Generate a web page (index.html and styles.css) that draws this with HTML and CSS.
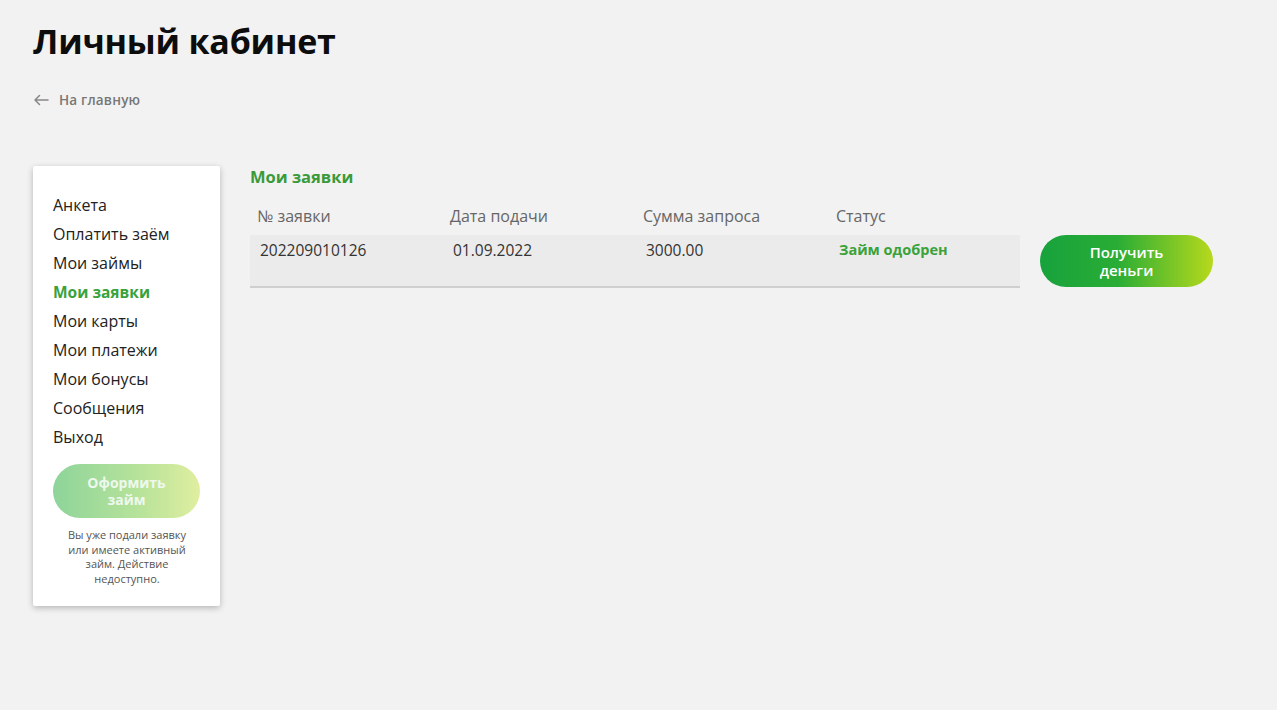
FILE: index.html
```html
<!DOCTYPE html>
<html lang="ru">
<head>
<meta charset="utf-8">
<title>Личный кабинет</title>
<link rel="stylesheet" href="styles.css">
</head>
<body>
<div class="page">
  <h1 class="title">Личный кабинет</h1>
  <a class="back" href="#">
    <svg class="back-icon" width="16" height="12" viewBox="0 0 16 12"><path d="M15 6H2M6.5 1.5L2 6l4.5 4.5" fill="none" stroke="#888" stroke-width="1.5" stroke-linecap="round" stroke-linejoin="round"/></svg>
    <span>На главную</span>
  </a>
  <div class="main">
    <aside class="side">
      <nav class="menu">
        <a href="#">Анкета</a>
        <a href="#">Оплатить заём</a>
        <a href="#">Мои займы</a>
        <a href="#" class="active">Мои заявки</a>
        <a href="#">Мои карты</a>
        <a href="#">Мои платежи</a>
        <a href="#">Мои бонусы</a>
        <a href="#">Сообщения</a>
        <a href="#">Выход</a>
      </nav>
      <button class="btn btn-disabled">Оформить<br>займ</button>
      <p class="note">Вы уже подали заявку или имеете активный займ. Действие недоступно.</p>
    </aside>
    <section class="content">
      <h2 class="section-title">Мои заявки</h2>
      <div class="table-wrap">
        <div class="table">
          <div class="thead">
            <div>№ заявки</div>
            <div>Дата подачи</div>
            <div>Сумма запроса</div>
            <div>Статус</div>
          </div>
          <div class="trow">
            <div>202209010126</div>
            <div>01.09.2022</div>
            <div>3000.00</div>
            <div class="status">Займ одобрен</div>
          </div>
        </div>
        <button class="btn btn-get">Получить<br>деньги</button>
      </div>
    </section>
  </div>
</div>
</body>
</html>
```
FILE: styles.css
```css
* { box-sizing: border-box; }
html, body { margin: 0; padding: 0; }
body {
  background: #f2f2f2;
  font-family: "Open Sans", "Noto Sans", sans-serif;
  color: #222;
  width: 1277px;
  height: 710px;
  overflow: hidden;
}
.page { padding: 20px 0 0 33px; }
.title {
  margin: 0;
  font-size: 34px;
  font-weight: 700;
  line-height: 42px;
  color: #0d0d0d;
  letter-spacing: -0.2px;
}
.back {
  display: flex;
  align-items: center;
  gap: 10px;
  margin-top: 30px;
  height: 16px;
  text-decoration: none;
  color: #777;
  font-size: 13.5px;
  font-weight: 600;
  letter-spacing: 0.2px;
}
.back-icon { display: block; }
.main {
  display: flex;
  align-items: flex-start;
  margin-top: 58px;
}
.side {
  width: 187px;
  background: #fff;
  box-shadow: 0 2px 6px rgba(0,0,0,0.25);
  border-radius: 2px;
  padding: 25px 16px 20px 20px;
}
.menu { display: flex; flex-direction: column; }
.menu a {
  text-decoration: none;
  color: #222;
  font-size: 16px;
  line-height: 29px;
  height: 29px;
  white-space: nowrap;
}
.menu a.active { color: #3aa23a; font-weight: 700; font-size: 15.5px; }
.btn {
  border: none;
  border-radius: 30px;
  color: #fff;
  font-family: inherit;
  font-weight: 700;
  font-size: 14px;
  line-height: 17px;
  text-align: center;
  cursor: pointer;
}
.btn-disabled {
  display: block;
  width: 147px;
  height: 54px;
  margin-top: 12px;
  background: linear-gradient(90deg, #8ed49a 0%, #b8e39a 60%, #e0eea0 100%);
  color: #eef8ee;
}
.note {
  margin: 10px 0 0 4px;
  width: 140px;
  font-size: 11px;
  line-height: 14.5px;
  text-align: center;
  color: #555;
}
.content { margin-left: 30px; margin-top: 0; }
.section-title {
  margin: 0;
  color: #3a9a3a;
  font-size: 16.5px;
  font-weight: 700;
  line-height: 22px;
}
.table-wrap {
  display: flex;
  align-items: flex-start;
  gap: 20px;
  margin-top: 16px;
}
.table { width: 770px; }
.thead, .trow {
  display: grid;
  grid-template-columns: 193px 193px 193px 1fr;
}
.thead {
  color: #666;
  font-size: 16px;
  line-height: 20px;
  height: 31px;
  padding: 2px 0 0 7px;
}
.trow {
  background: #ebebeb;
  border-bottom: 2px solid #cfcfcf;
  height: 53px;
  padding: 5px 0 0 10px;
  font-size: 15.5px;
  line-height: 20px;
  color: #333;
}
.status { color: #3aa23a; font-weight: 700; font-size: 14.5px; }
.btn-get {
  width: 173px;
  height: 52px;
  margin-top: 31px;
  background: linear-gradient(90deg, #17a23c 0%, #2aad35 45%, #b7d91c 100%);
  font-size: 15px;
  line-height: 18px;
  font-weight: 600;
}
```
